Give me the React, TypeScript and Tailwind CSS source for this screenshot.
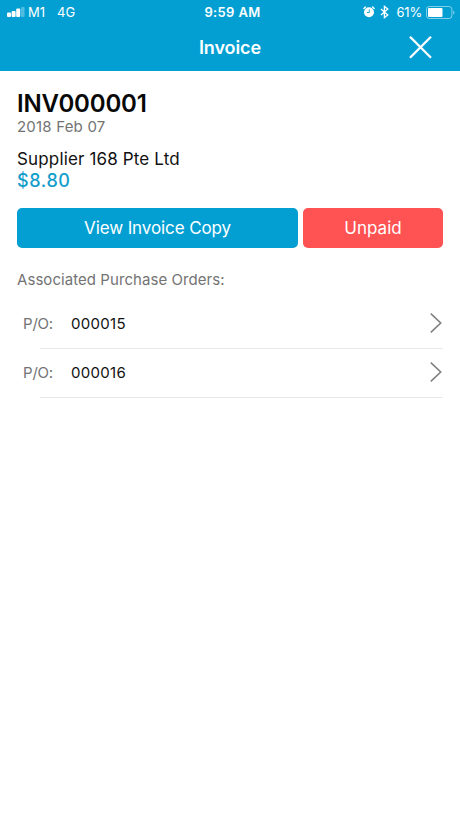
interface PurchaseOrder {
  id: string;
}

const orders: PurchaseOrder[] = [{ id: '000015' }, { id: '000016' }];

function SignalIcon() {
  return (
    <svg width="18" height="10" viewBox="0 0 18 10" fill="currentColor">
      <rect x="0" y="5.5" width="4" height="4.5" rx="1" />
      <rect x="4.6" y="4" width="4" height="6" rx="1" />
      <rect x="9.2" y="1.6" width="4" height="8.4" rx="1" />
      <rect x="14" y="0" width="3.6" height="10" rx="1" opacity="0.3" />
    </svg>
  );
}

function AlarmIcon() {
  return (
    <svg width="12" height="12" viewBox="0 0 12 12" fill="none">
      <circle cx="6" cy="6.2" r="5" fill="white" />
      <path d="M0.9 2.4 L2.4 1 M11.1 2.4 L9.6 1" stroke="white" strokeWidth="1.4" strokeLinecap="round" />
      <path d="M6.3 3.4 V6.5 H3.9" stroke="#039fd3" strokeWidth="0.9" />
    </svg>
  );
}

function BluetoothIcon() {
  return (
    <svg width="9" height="14" viewBox="0 0 9 14" fill="none" stroke="white" strokeWidth="1.3">
      <path d="M1 4 L7.8 9.9 L4.4 12.6 V1.4 L7.8 4.1 L1 10" />
    </svg>
  );
}

function BatteryIcon() {
  return (
    <svg width="29" height="13" viewBox="0 0 29 13" fill="none">
      <rect x="0.5" y="0.5" width="25.4" height="12" rx="2.8" stroke="white" strokeOpacity="0.5" />
      <rect x="2" y="2" width="14.5" height="9" rx="1" fill="white" />
      <path d="M27.2 4.4 C29 5.2 29 7.8 27.2 8.6 Z" fill="white" fillOpacity="0.5" />
    </svg>
  );
}

function StatusBar() {
  return (
    <div className="grid h-6 grid-cols-3 items-center pr-[5px] pl-[7px] text-[13px] leading-none">
      <div className="flex items-center">
        <SignalIcon />
        <span className="ml-[3px]">M1</span>
        <span className="ml-3">4G</span>
      </div>
      <span className="pl-[3px] text-center font-semibold tracking-[0.35px]">9:59 AM</span>
      <div className="flex items-center justify-end">
        <span className="pb-px">
          <AlarmIcon />
        </span>
        <span className="ml-[5px]">
          <BluetoothIcon />
        </span>
        <span className="ml-[7px] tracking-[-0.2px]">61%</span>
        <span className="ml-1">
          <BatteryIcon />
        </span>
      </div>
    </div>
  );
}

function OrderRow({ order }: { order: PurchaseOrder }) {
  return (
    <li className="flex h-[49px] flex-col pl-[6px] text-[15px] leading-5">
      <div className="flex h-12 items-center pb-px">
        <span className="w-12 tracking-[-0.2px] text-[#737373]">P/O:</span>
        <span className="tracking-[0.3px] text-[#111]">{order.id}</span>
        <svg className="mr-px mb-px ml-auto" width="12" height="20" viewBox="0 0 12 20" fill="none">
          <path d="M0.8 0.7 L10.7 10 L0.8 19.3" stroke="#808080" strokeWidth="1.6" />
        </svg>
      </div>
      <div className="ml-[17px] h-px bg-[#e8e8e8]" />
    </li>
  );
}

export default function App() {
  return (
    <div className="min-h-screen bg-white font-['Inter',sans-serif]">
      <header className="h-[71px] bg-[#039fd3] text-white">
        <StatusBar />
        <div className="grid h-[46px] grid-cols-[1fr_auto_1fr] items-center px-7">
          <h1 className="col-start-2 pt-px text-lg font-semibold tracking-[-0.1px]">Invoice</h1>
          <button className="justify-self-end" aria-label="Close">
            <svg width="23" height="23" viewBox="0 0 23 23" fill="none">
              <path d="M1 0.8 L22 21.8 M22 0.8 L1 21.8" stroke="white" strokeWidth="2.3" />
            </svg>
          </button>
        </div>
      </header>

      <main className="px-[17px] pt-[17px]">
        <h2 className="pt-px text-2xl leading-[29px] font-semibold tracking-[-0.15px] text-[#080808]">INV000001</h2>
        <p className="text-[15px] leading-[18px] tracking-[0.2px] text-[#737373]">2018 Feb 07</p>
        <p className="mt-3 text-[17px] leading-[22px] tracking-[0.15px] text-[#111]">Supplier 168 Pte Ltd</p>
        <p className="text-lg leading-[22px] font-medium tracking-[0.6px] text-[#139dcb]">$8.80</p>

        <div className="mt-4 flex gap-[5px] text-[17px] text-white">
          <button className="h-10 w-[281px] rounded-[5px] bg-[#039fd3] pt-[2px] tracking-[-0.1px]">View Invoice Copy</button>
          <button className="h-10 flex-1 rounded-[5px] bg-[#ff5252] pt-[2px]">Unpaid</button>
        </div>

        <h3 className="mt-[22px] text-[15px] leading-5 tracking-[0.06px] text-[#737373]">Associated Purchase Orders:</h3>
        <ul className="mt-[10px]">
          {orders.map((order) => (
            <OrderRow key={order.id} order={order} />
          ))}
        </ul>
      </main>
    </div>
  );
}
